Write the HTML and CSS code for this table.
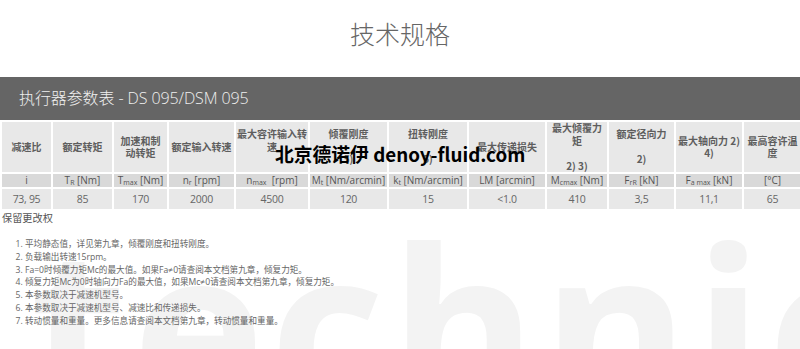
FILE: index.html
```html
<!DOCTYPE html>
<html lang="zh">
<head>
<meta charset="utf-8">
<title>技术规格</title>
<link rel="stylesheet" href="styles.css">
</head>
<body>
<div class="watermark" aria-hidden="true"><span class="watermark-text">technic</span></div>
<h1 class="page-title">技术规格</h1>
<div class="bar">执行器参数表 - DS 095/DSM 095</div>
<table class="spec">
  <colgroup>
    <col class="c1"><col class="c2"><col class="c3"><col class="c4"><col class="c5"><col class="c6">
    <col class="c7"><col class="c8"><col class="c9"><col class="c10"><col class="c11"><col class="c12">
  </colgroup>
  <thead>
    <tr class="head">
      <th>减速比</th>
      <th>额定转矩</th>
      <th>加速和制<br>动转矩</th>
      <th>额定输入转速</th>
      <th>最大容许输入转<br>速<br>&nbsp;</th>
      <th>倾覆刚度<br><br>5)</th>
      <th>扭转刚度<br><br>5)</th>
      <th>最大传递损失</th>
      <th>最大倾覆力<br>矩<br><br>2) 3)</th>
      <th>额定径向力<br><br>2)</th>
      <th>最大轴向力 2)<br>4)</th>
      <th>最高容许温<br>度</th>
    </tr>
  </thead>
  <tbody>
    <tr class="units">
      <td>i</td>
      <td>T<sub>R</sub> [Nm]</td>
      <td>T<sub>max</sub> [Nm]</td>
      <td>n<sub>r</sub> [rpm]</td>
      <td>n<sub>max</sub>&nbsp; [rpm]</td>
      <td>M<sub>t</sub> [Nm/arcmin]</td>
      <td>k<sub>t</sub> [Nm/arcmin]</td>
      <td>LM [arcmin]</td>
      <td>M<sub>cmax</sub> [Nm]</td>
      <td>F<sub>rR</sub> [kN]</td>
      <td>F<sub>a max</sub> [kN]</td>
      <td>[°C]</td>
    </tr>
    <tr class="vals">
      <td>73, 95</td>
      <td>85</td>
      <td>170</td>
      <td>2000</td>
      <td>4500</td>
      <td>120</td>
      <td>15</td>
      <td>&lt;1.0</td>
      <td>410</td>
      <td>3,5</td>
      <td>11,1</td>
      <td>65</td>
    </tr>
  </tbody>
</table>
<p class="reserve">保留更改权</p>
<ol class="notes">
  <li>平均静态值，详见第九章，倾覆刚度和扭转刚度。</li>
  <li>负载输出转速15rpm。</li>
  <li>Fa=0时倾覆力矩Mc的最大值。如果Fa≠0请查阅本文档第九章，倾复力矩。</li>
  <li>倾复力矩Mc为0时轴向力Fa的最大值，如果Mc≠0请查阅本文档第九章，倾复力矩。</li>
  <li>本参数取决于减速机型号。</li>
  <li>本参数取决于减速机型号、减速比和传递损失。</li>
  <li>转动惯量和重量。更多信息请查阅本文档第九章，转动惯量和重量。</li>
</ol>
<div class="stamp">北京德诺伊 denoy-fluid.com</div>
</body>
</html>
```
FILE: styles.css
```css
html, body {
  margin: 0;
  padding: 0;
  overflow: hidden;
  background: #fff;
}
body {
  position: relative;
  width: 800px;
  height: 349px;
  font-family: "Open Sans", "Noto Sans CJK SC", sans-serif;
  color: #666;
}
.watermark {
  position: absolute;
  left: 0;
  top: 240px;
  width: 800px;
  height: 109px;
  overflow: hidden;
  z-index: 0;
}
.watermark-text {
  position: absolute;
  left: 30px;
  top: -27px;
  font-family: "Open Sans", sans-serif;
  font-weight: 700;
  font-size: 224px;
  line-height: 1;
  letter-spacing: 5px;
  color: #f3f3f3;
  white-space: nowrap;
}
.page-title {
  position: relative;
  margin: 0;
  height: 77px;
  display: flex;
  align-items: center;
  justify-content: center;
  padding-bottom: 12px;
  box-sizing: border-box;
  font-family: "Noto Sans CJK SC", sans-serif;
  font-weight: 300;
  font-size: 25px;
  color: #666;
}
.bar {
  position: relative;
  height: 43px;
  line-height: 43px;
  padding-left: 19px;
  background: #656565;
  color: #f0f0f0;
  font-family: "Open Sans", "Noto Sans CJK SC", sans-serif;
  font-weight: 300;
  font-size: 16px;
  letter-spacing: -0.1px;
}
.spec {
  position: relative;
  width: 800px;
  table-layout: fixed;
  border-collapse: separate;
  border-spacing: 2px;
  margin: 0;
}
.c1 { width: 49px; }
.c2 { width: 59px; }
.c3 { width: 53px; }
.c4 { width: 65px; }
.c5 { width: 72px; }
.c6 { width: 77px; }
.c7 { width: 78px; }
.c8 { width: 76px; }
.c9 { width: 60px; }
.c10 { width: 65px; }
.c11 { width: 66px; }
.c12 { width: 57px; }
.spec th, .spec td {
  padding: 0;
  text-align: center;
  vertical-align: middle;
  white-space: nowrap;
}
.head th {
  height: 50px;
  background: #e8e8e8;
  font-family: "Noto Sans CJK SC", sans-serif;
  font-weight: 700;
  font-size: 10px;
  line-height: 12.5px;
  color: #5e5e5e;
}
.units td {
  height: 13px;
  background: #d9d9d9;
  font-size: 10px;
  line-height: 13px;
  color: #555;
}
.units sub {
  font-size: 7px;
  line-height: 0;
  vertical-align: -1px;
}
.vals td {
  height: 20px;
  background: #e8e8e8;
  font-size: 10.5px;
  line-height: 20px;
  letter-spacing: -0.3px;
  color: #666;
}
.reserve {
  position: relative;
  margin: 0 0 0 2px;
  font-family: "Noto Sans CJK SC", sans-serif;
  font-size: 10.2px;
  line-height: 13px;
  color: #555;
}
.notes {
  position: relative;
  margin: 14px 0 0;
  padding-left: 25px;
  font-family: "Open Sans", "Noto Sans CJK SC", sans-serif;
  font-size: 8.6px;
  line-height: 12.8px;
  color: #666;
}
.stamp {
  position: absolute;
  left: 275px;
  top: 145px;
  z-index: 2;
  font-family: "Noto Sans CJK SC", sans-serif;
  font-weight: 700;
  font-size: 18.8px;
  line-height: 1;
  color: #000;
  white-space: nowrap;
}
```
